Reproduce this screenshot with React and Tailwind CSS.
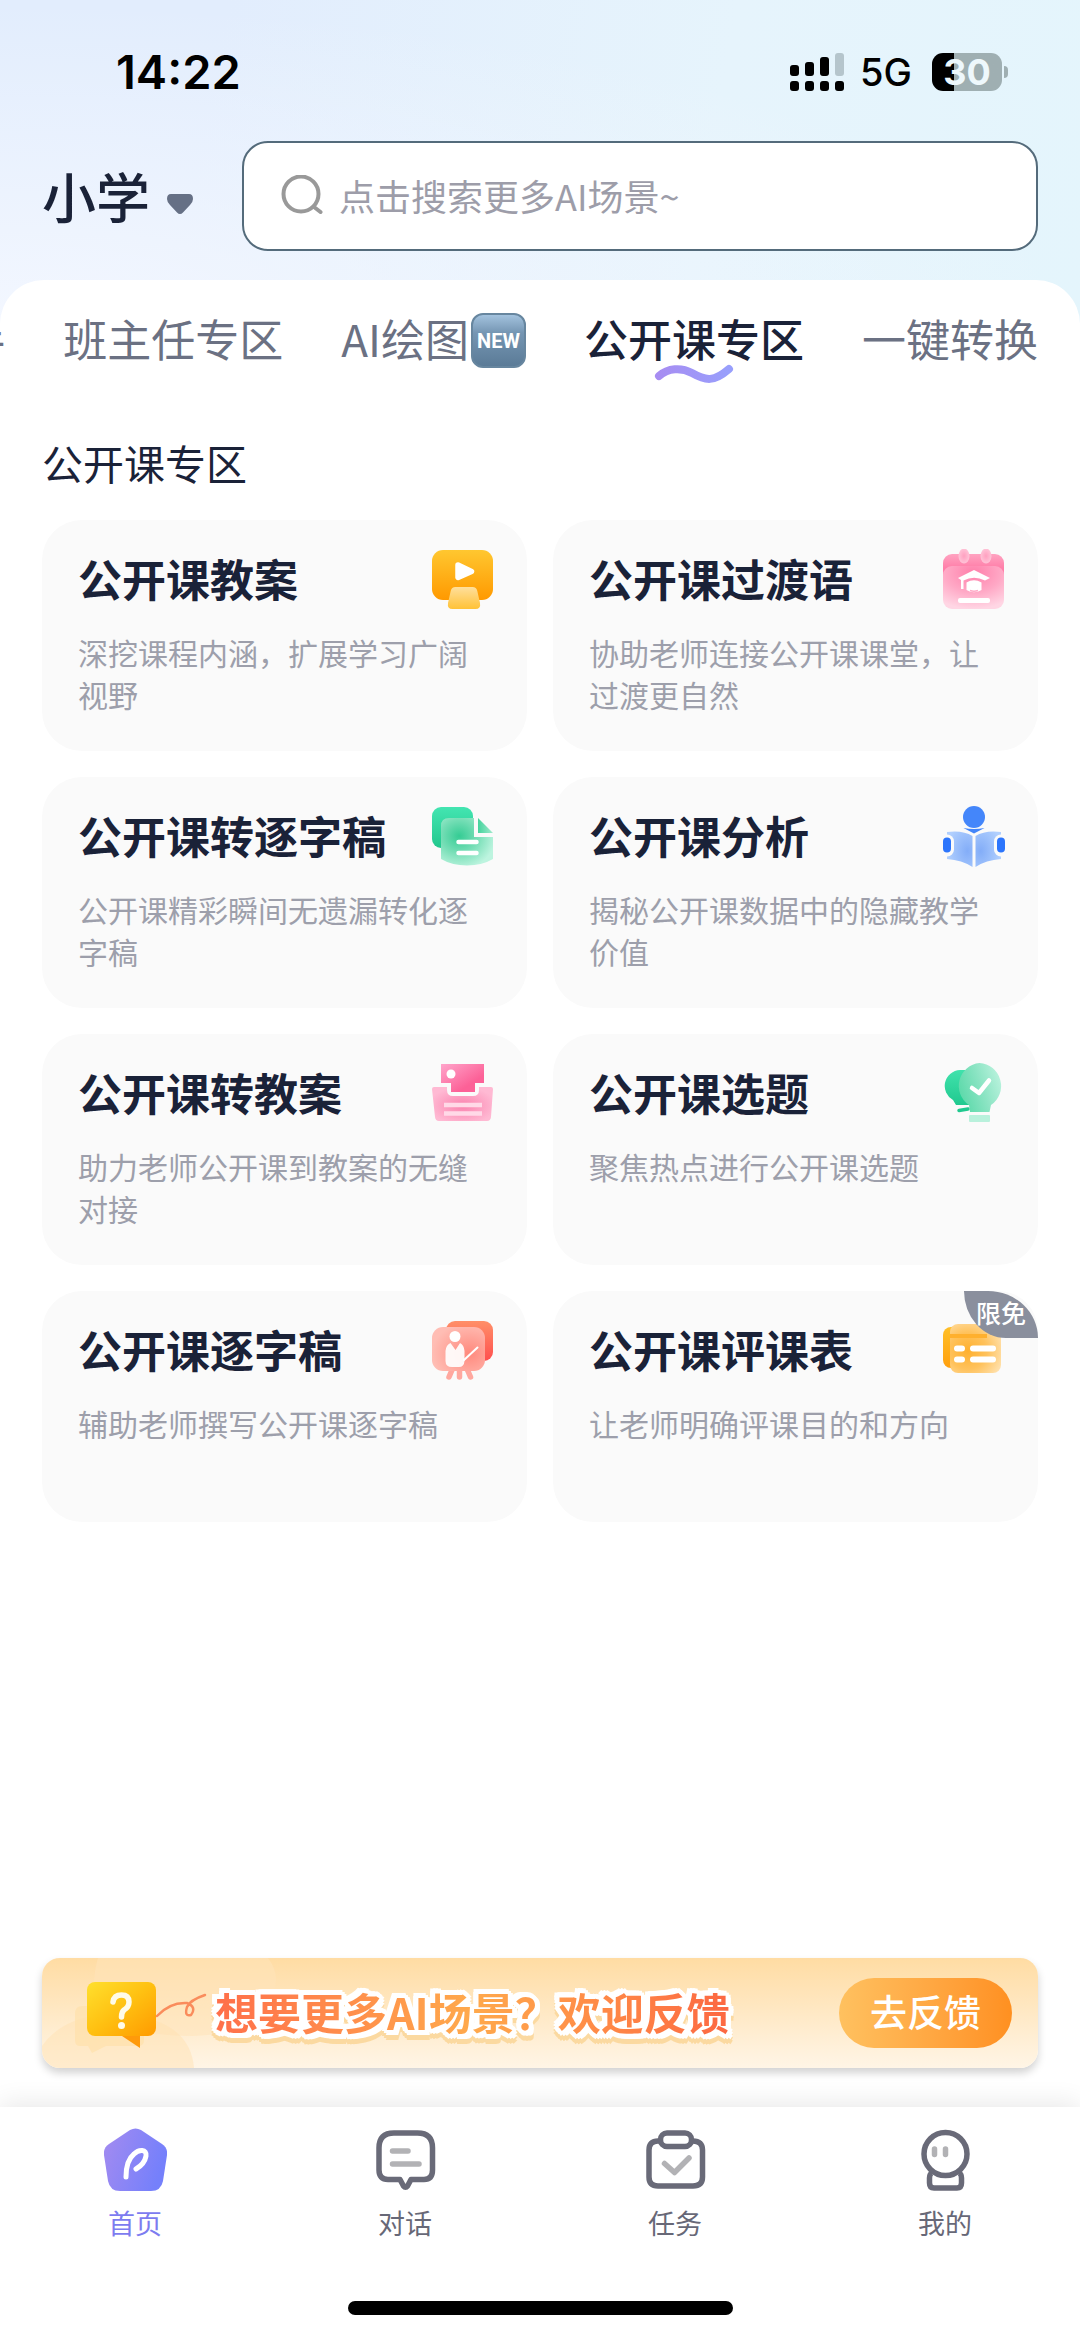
import React, { useState } from "react";
import clsx from "clsx";

/* ---------- card icons ---------- */

const LessonPlanIcon = () => (
  <>
    <defs>
      <linearGradient id="planBack" x1="0" y1="0" x2="0" y2="1">
        <stop offset="0" stopColor="#ffc730" />
        <stop offset="1" stopColor="#ff9900" />
      </linearGradient>
      <linearGradient id="planFront" x1="0" y1="0" x2="0" y2="1">
        <stop offset="0" stopColor="#ffdf9c" />
        <stop offset="1" stopColor="#ffc237" />
      </linearGradient>
    </defs>
    <rect x="0" y="1" width="61" height="50" rx="11" fill="url(#planBack)" />
    <path d="M26 16L39.500 22.500L26 28.500Z" fill="#fff" stroke="#fff" strokeWidth="5.500" strokeLinejoin="round" />
    <path d="M23.500 38H40.500Q44.500 38 45.300 42L48 54Q49 60 43.500 60H20.500Q15 60 16 54L18.700 42Q19.500 38 23.500 38Z" fill="url(#planFront)" />
  </>
);

const TransitionIcon = () => (
  <>
    <defs>
      <linearGradient id="calBack" x1="0" y1="0" x2="0" y2="1">
        <stop offset="0" stopColor="#ffa3c1" />
        <stop offset="0.350" stopColor="#ff7fa9" />
      </linearGradient>
      <radialGradient id="calFront" cx="0.500" cy="0.150" r="0.850">
        <stop offset="0" stopColor="#ff80ab" />
        <stop offset="0.550" stopColor="#ffa9c6" />
        <stop offset="1" stopColor="#ffd6e4" />
      </radialGradient>
      <radialGradient id="calRing">
        <stop offset="0" stopColor="#ffa0c0" />
        <stop offset="1" stopColor="#ffc3d7" />
      </radialGradient>
    </defs>
    <rect x="0" y="5" width="61" height="40" rx="9" fill="url(#calBack)" />
    <rect x="0" y="17" width="61" height="43" rx="9" fill="url(#calFront)" />
    <ellipse cx="21" cy="7" rx="5.500" ry="7.500" fill="url(#calRing)" />
    <ellipse cx="43" cy="7" rx="5.500" ry="7.500" fill="url(#calRing)" />
    <path d="M31 21L47 29L42 31.500Q31 26 20.500 31.500V40H18V31L15 29Z" fill="#fff" />
    <path d="M23.500 33.500Q31 29 38.500 33.500V41Q31 45.500 23.500 41Z" fill="#fff" />
    <path d="M27 41.500Q31 43 35 41.500" stroke="#ffa9c6" strokeWidth="1.500" fill="none" />
    <rect x="15" y="49" width="32" height="5" rx="2" fill="#fff" />
  </>
);

const TranscriptIcon = () => (
  <>
    <defs>
      <linearGradient id="docBack" x1="0" y1="0" x2="0" y2="1">
        <stop offset="0" stopColor="#43e5b1" />
        <stop offset="1" stopColor="#22c78d" />
      </linearGradient>
      <radialGradient id="docFront" cx="0.350" cy="0.380" r="0.700">
        <stop offset="0" stopColor="#35cc94" />
        <stop offset="0.500" stopColor="#76deb6" />
        <stop offset="1" stopColor="#bdf4df" />
      </radialGradient>
      <linearGradient id="docFold" x1="0" y1="0" x2="1" y2="0">
        <stop offset="0" stopColor="#45d39d" />
        <stop offset="1" stopColor="#a2ebce" />
      </linearGradient>
    </defs>
    <rect x="0" y="1" width="41" height="41" rx="9" fill="url(#docBack)" />
    <path d="M17 12H42V31H61V53Q50 59.500 35 59.500Q20 59.500 9 53V20Q9 12 17 12Z" fill="url(#docFront)" />
    <path d="M46 12L61 27H46Z" fill="url(#docFold)" />
    <path d="M26.500 36H44.500M26.500 47H44.500" stroke="#fff" strokeWidth="4.500" strokeLinecap="round" />
  </>
);

const AnalysisIcon = () => (
  <>
    <defs>
      <radialGradient id="pageLeft" cx="0.800" cy="0.550" r="0.800">
        <stop offset="0" stopColor="#83adf8" />
        <stop offset="1" stopColor="#b0cffe" />
      </radialGradient>
      <radialGradient id="pageRight" cx="0.200" cy="0.550" r="0.800">
        <stop offset="0" stopColor="#83adf8" />
        <stop offset="1" stopColor="#b0cffe" />
      </radialGradient>
    </defs>
    <circle cx="31" cy="11" r="11" fill="#4486fa" />
    <path d="M20.500 22Q31 24 41.500 22L31 27.500Z" fill="#4486fa" />
    <path d="M4 26Q20 24 29.500 30V61Q19 54 4 53Z" fill="url(#pageLeft)" />
    <path d="M58 26Q42 24 32.500 30V61Q43 54 58 53Z" fill="url(#pageRight)" />
    <rect x="-3" y="28.500" width="14" height="22" rx="7" fill="#fafafa" />
    <rect x="51" y="28.500" width="14" height="22" rx="7" fill="#fafafa" />
    <rect x="0" y="31.500" width="8" height="15" rx="4" fill="#2c75fc" />
    <rect x="54" y="31.500" width="8" height="15" rx="4" fill="#2c75fc" />
  </>
);

const ToPlanIcon = () => (
  <>
    <defs>
      <linearGradient id="sheet" x1="0" y1="0" x2="1" y2="1">
        <stop offset="0" stopColor="#ffa5cb" />
        <stop offset="0.700" stopColor="#fc6197" />
        <stop offset="1" stopColor="#fc6197" />
      </linearGradient>
      <radialGradient id="tray" cx="0.500" cy="0.550" r="0.550">
        <stop offset="0" stopColor="#fa82ae" />
        <stop offset="1" stopColor="#ffb9d3" />
      </radialGradient>
    </defs>
    <path d="M9 1H52V20H43V29H19V20H9Z" fill="url(#sheet)" />
    <circle cx="19" cy="11" r="4.500" fill="#fff" />
    <path d="M2 24H15V27Q15 33 21 33H41Q47 33 47 27V24H59Q61 24 61 26L59 54Q58.500 58 55 58H7Q3.500 58 3 54L0 26Q0 24 2 24Z" fill="url(#tray)" />
    <path d="M12 42H50M12 50.500H50" stroke="#ffd9e7" strokeWidth="4.500" />
  </>
);

const TopicIcon = () => (
  <>
    <defs>
      <linearGradient id="bulbBack" x1="0" y1="0" x2="0" y2="1">
        <stop offset="0" stopColor="#41e2ac" />
        <stop offset="1" stopColor="#20c98f" />
      </linearGradient>
      <linearGradient id="bulbFront" x1="0" y1="0.600" x2="1" y2="0.200">
        <stop offset="0" stopColor="#5cd9aa" />
        <stop offset="0.500" stopColor="#8be4c3" />
        <stop offset="1" stopColor="#bdf3df" />
      </linearGradient>
    </defs>
    <path d="M17 7A16 16 0 0 0 10 37L13 42H28V7Z" fill="url(#bulbBack)" />
    <path d="M16 47.500L25 46" stroke="#20c98f" strokeWidth="3.500" strokeLinecap="round" />
    <path d="M36.500 0A23 23 0 0 1 48 42L46.500 49H27L26 42A23 23 0 0 1 36.500 0Z" fill="url(#bulbFront)" />
    <rect x="26" y="52" width="21" height="7" rx="1" fill="#b9f1dc" />
    <path d="M29 25L36 30L46 17.500" stroke="#fff" strokeWidth="4.500" strokeLinecap="round" strokeLinejoin="round" fill="none" />
  </>
);

const ScriptIcon = () => (
  <>
    <defs>
      <linearGradient id="boardBack" x1="0" y1="0" x2="0" y2="1">
        <stop offset="0" stopColor="#ff8f68" />
        <stop offset="1" stopColor="#ff4f4f" />
      </linearGradient>
      <radialGradient id="boardFront" cx="0.700" cy="0.600" r="0.700">
        <stop offset="0" stopColor="#ff897d" />
        <stop offset="1" stopColor="#ffbdb4" />
      </radialGradient>
    </defs>
    <rect x="14" y="1" width="47" height="40" rx="9" fill="url(#boardBack)" />
    <path d="M20 50L17 57M27.500 50V57M35.500 50L38.500 57" stroke="#ffa89f" strokeWidth="5.500" strokeLinecap="round" />
    <rect x="0" y="7" width="53" height="44" rx="11" fill="url(#boardFront)" />
    <circle cx="23" cy="16.500" r="5.500" fill="#fff" />
    <path d="M18.500 23L23.500 30L28 23Q32 25 32.500 31V41Q32 47 27 47H20Q13.500 47 13.500 41V31Q14 25 18.500 23Z" fill="#fff" fillOpacity="0.920" />
    <path d="M32 40L45.500 27.500" stroke="#fff" strokeWidth="2" strokeLinecap="round" />
  </>
);

const ReviewTableIcon = () => (
  <>
    <defs>
      <linearGradient id="tableBack" x1="0" y1="0" x2="0" y2="1">
        <stop offset="0" stopColor="#ffbf27" />
        <stop offset="1" stopColor="#ff9f0d" />
      </linearGradient>
      <radialGradient id="tableFront" cx="0.350" cy="0.550" r="0.750">
        <stop offset="0" stopColor="#ffb02e" />
        <stop offset="0.500" stopColor="#ffc25c" />
        <stop offset="1" stopColor="#ffe3b3" />
      </radialGradient>
    </defs>
    <rect x="0" y="7" width="30" height="41" rx="8" fill="url(#tableBack)" />
    <rect x="7" y="4" width="51" height="49" rx="8" fill="url(#tableFront)" />
    <path d="M7 14H44V18H7Z" fill="#ffb02e" />
    <path d="M14 28.500H19M30 28.500H50M14 39.500H19M30 39.500H50" stroke="#fff" strokeWidth="6" strokeLinecap="round" />
  </>
);

const cards = [
  { title: "公开课教案", desc: "深挖课程内涵，扩展学习广阔视野", icon: LessonPlanIcon },
  { title: "公开课过渡语", desc: "协助老师连接公开课课堂，让过渡更自然", icon: TransitionIcon },
  { title: "公开课转逐字稿", desc: "公开课精彩瞬间无遗漏转化逐字稿", icon: TranscriptIcon },
  { title: "公开课分析", desc: "揭秘公开课数据中的隐藏教学价值", icon: AnalysisIcon },
  { title: "公开课转教案", desc: "助力老师公开课到教案的无缝对接", icon: ToPlanIcon },
  { title: "公开课选题", desc: "聚焦热点进行公开课选题", icon: TopicIcon },
  { title: "公开课逐字稿", desc: "辅助老师撰写公开课逐字稿", icon: ScriptIcon },
  { title: "公开课评课表", desc: "让老师明确评课目的和方向", icon: ReviewTableIcon, badge: "限免" },
];

const tabs = [
  { label: "小助手" },
  { label: "班主任专区" },
  { label: "AI绘图", isNew: true },
  { label: "公开课专区" },
  { label: "一键转换" },
];

/* ---------- bottom nav icons ---------- */

const HomeIcon = () => (
  <>
    <defs>
      <linearGradient id="home" x1="0" y1="0" x2="1" y2="0.300">
        <stop offset="0" stopColor="#a48bf0" />
        <stop offset="1" stopColor="#7580fb" />
      </linearGradient>
    </defs>
    <path d="M26 2Q31.500 -1 37 2L58 16Q64 20 63 27L59 53Q57 63 47 63H16Q6 63 4 53L0 27Q-1 20 5 16Z" fill="url(#home)" />
    <path d="M22 49C22 38 25 30 30 26C35 21 43 21 42 28C41 34 37 38 32 41" stroke="#fff" strokeWidth="5" strokeLinecap="round" strokeLinejoin="round" fill="none" />
  </>
);

const ChatIcon = () => (
  <>
    <path d="M20 5H43.500Q58.500 5 58.500 20V42Q58.500 51.500 50 51.500H37L33.500 58Q31.500 60.500 29.500 58L26 51.500H14Q5 51.500 5 42V20Q5 5 20 5Z" stroke="#696a78" strokeWidth="5.500" strokeLinejoin="round" fill="none" />
    <path d="M18.500 23H34M18.500 36H45" stroke="#b2b2b5" strokeWidth="5.500" strokeLinecap="round" />
  </>
);

const TaskIcon = () => (
  <>
    <path d="M16 13H14Q5 13 5 22V49Q5 58 14 58H49Q58.500 58 58.500 49V22Q58.500 13 49 13H47" stroke="#696a78" strokeWidth="5.500" fill="none" />
    <rect x="16.500" y="5" width="31" height="13.500" rx="6.500" stroke="#696a78" strokeWidth="5.500" fill="none" />
    <path d="M20.500 35.500L30.500 44.500L45 30" stroke="#b2b2b5" strokeWidth="5.500" strokeLinecap="round" strokeLinejoin="round" fill="none" />
  </>
);

const MeIcon = () => (
  <>
    <path d="M18 45Q15.500 46 15.500 50V55Q15.500 60 20 60H43Q47.500 60 47.500 55V50Q47.500 46 45 45" stroke="#696a78" strokeWidth="5.500" fill="none" />
    <circle cx="31.500" cy="26" r="21.500" stroke="#696a78" strokeWidth="5.500" fill="none" />
    <path d="M20.500 21V26.500M31.500 21V26.500" stroke="#b2b2b5" strokeWidth="5.500" strokeLinecap="round" />
  </>
);

const navItems = [
  { label: "首页", icon: HomeIcon },
  { label: "对话", icon: ChatIcon },
  { label: "任务", icon: TaskIcon },
  { label: "我的", icon: MeIcon },
];

const StatusBar = () => (
  <div className="flex items-center justify-between pt-[49px] pb-[46px] pl-[116px] pr-[72px] font-['Inter',sans-serif] text-black">
    <span className="text-[47px] leading-[46px] font-semibold">14:22</span>
    <div className="flex items-center">
      <svg viewBox="0 0 54 38" className="w-[54px] h-[38px]">
        <g fill="#000">
          <rect x="0" y="12" width="9" height="11" rx="3" />
          <rect x="15" y="9" width="9" height="14" rx="3" />
          <rect x="30" y="4" width="9" height="19" rx="3" />
          <rect x="0" y="28" width="9" height="10" rx="3" />
          <rect x="15" y="28" width="9" height="10" rx="3" />
          <rect x="30" y="28" width="9" height="10" rx="3" />
          <rect x="45" y="28" width="9" height="10" rx="3" />
        </g>
        <rect x="45" y="0" width="9" height="23" rx="3" fill="#b5c5cc" />
      </svg>
      <span className="ml-4 text-[38px] leading-[46px] font-medium">5G</span>
      <div className="ml-5 flex h-[38px] w-[70px] items-center justify-center rounded-[11px] bg-linear-to-r from-black from-31% to-[#9fafb2] to-31% text-[36px] font-bold text-[#eef8fc]">
        30
      </div>
      <span className="ml-[2px] h-3 w-1 rounded-r-full bg-[#9fafb2]" />
    </div>
  </div>
);

const SearchHeader = () => {
  const [grade, setGrade] = useState("小学");
  const [keyword, setKeyword] = useState("");

  return (
    <div className="flex items-center px-[42px] pb-[29px]">
      <label className="flex items-center gap-4">
        <select
          aria-label="学段"
          value={grade}
          onChange={(e) => setGrade(e.target.value)}
          className="w-[108px] appearance-none bg-transparent text-[54px] leading-[72px] font-medium text-[#1a2238] outline-none"
        >
          <option>小学</option>
          <option>初中</option>
          <option>高中</option>
        </select>
        <svg viewBox="0 0 28 22" className="pointer-events-none mt-4 h-[22px] w-[28px]">
          <path d="M5 1H23Q27 1 27 6Q27 9 24 12L17 19.500Q14 22.500 11 19.500L4 12Q1 9 1 6Q1 1 5 1Z" fill="#667085" />
        </svg>
      </label>

      <label className="ml-12 flex h-[110px] flex-1 items-center gap-4 rounded-[26px] border-2 border-[#546b7b] bg-white pl-[37px] pr-6">
        <svg viewBox="0 0 42 42" fill="none" className="h-[42px] w-[42px] shrink-0" stroke="#999" strokeWidth="4" strokeLinecap="round">
          <circle cx="20" cy="19" r="17.500" />
          <path d="M33 32L39.500 37" />
        </svg>
        <input
          type="text"
          aria-label="搜索"
          value={keyword}
          onChange={(e) => setKeyword(e.target.value)}
          placeholder="点击搜索更多AI场景~"
          className="min-w-0 flex-1 bg-transparent pb-[3px] text-[36px] text-[#1a2238] outline-none placeholder:text-[#9d9da9]"
        />
      </label>
    </div>
  );
};

const Tabs = ({ active, onChange }) => (
  <nav className="flex justify-end gap-[58px] overflow-hidden rounded-t-[44px] px-[42px] pt-[28px]">
    {tabs.map((tab) => (
      <button
        key={tab.label}
        type="button"
        onClick={() => onChange(tab.label)}
        className={clsx(
          "relative flex h-[78px] shrink-0 items-start text-[44px] leading-[60px] whitespace-nowrap",
          active === tab.label ? "font-medium text-[#1a2238]" : "text-[#6b7183]"
        )}
      >
        {tab.label}
        {tab.isNew && (
          <span className="mt-[5px] ml-[2px] flex h-[55px] w-[55px] items-center justify-center rounded-xl border-2 border-[#67869f] bg-linear-to-b from-[#a3c2de] via-[#7596b3] via-35% to-[#5b7b97] font-['Roboto',sans-serif] text-[20px] leading-none font-bold text-white">
            NEW
          </span>
        )}
        {active === tab.label && (
          <svg viewBox="0 0 80 22" className="absolute bottom-0 left-1/2 h-[22px] w-[80px] -translate-x-1/2" fill="none">
            <defs>
              <linearGradient id="wave" x1="0" y1="0" x2="1" y2="0">
                <stop offset="0" stopColor="#a78df2" />
                <stop offset="1" stopColor="#989ffc" />
              </linearGradient>
            </defs>
            <path d="M5 12C14 4 27 3 38 9C52 17 60 18 75 5" stroke="url(#wave)" strokeWidth="8" strokeLinecap="round" />
          </svg>
        )}
      </button>
    ))}
  </nav>
);

const SceneCard = ({ title, desc, icon: CardIcon, badge }) => (
  <button
    type="button"
    className="relative flex min-h-[231px] flex-col overflow-hidden rounded-[40px] bg-[#fafafa] pt-[29px] pb-[33px] pl-9 pr-[33px] text-left"
  >
    <span className="flex w-full items-start justify-between">
      <span className="text-[44px] leading-[58px] font-bold text-[#1a2238]">{title}</span>
      <svg viewBox="0 0 62 62" className="h-[62px] w-[62px] shrink-0" fill="none">
        <CardIcon />
      </svg>
    </span>
    <span className="mt-5 text-[30px] leading-[42px] text-[#9d9fab]">{desc}</span>
    {badge && (
      <span className="absolute top-0 right-0 flex h-[47px] w-[74px] items-center justify-center rounded-tr-[50px_47px] rounded-bl-[42px_47px] bg-[#8a8f9d] pb-1 text-[25px] leading-none font-medium text-white">
        {badge}
      </span>
    )}
  </button>
);

const FeedbackBanner = () => (
  <div className="relative mx-[42px] mt-auto mb-[39px] flex h-[110px] items-center overflow-hidden rounded-[18px] bg-linear-to-b from-[#ffdca3] to-[#fff5e6] pl-[44px] pr-[26px] shadow-[0_5px_8px_rgba(0,0,0,0.18)]">
    <svg viewBox="0 0 340 110" className="absolute top-0 left-0 h-[110px] w-[340px]" fill="none">
      <path d="M56 0H226Q234 10 234 22Q230 76 150 78Q60 78 52 30Q52 12 56 0Z" fill="#ffe4b9" fillOpacity="0.550" />
      <path d="M0 88Q22 56 76 56Q148 60 152 110H0Z" fill="#ffdfaf" fillOpacity="0.450" />
      <path d="M40 48H96Q102 48 102 56V82Q102 88 96 88H64L50 95L46 88H38Q33 88 33 82V56Q33 48 40 48Z" fill="#ffe0a6" fillOpacity="0.600" />
    </svg>
    <svg viewBox="0 0 122 72" className="relative h-[72px] w-[122px] shrink-0" fill="none">
      <defs>
        <linearGradient id="bubble" x1="0" y1="0" x2="1" y2="1">
          <stop offset="0" stopColor="#ffe02e" />
          <stop offset="0.500" stopColor="#ffc011" />
          <stop offset="1" stopColor="#ff9a00" />
        </linearGradient>
      </defs>
      <path d="M33 57L54 71V52Z" fill="#ff9a0a" />
      <rect x="1" y="5" width="69" height="54" rx="8" fill="url(#bubble)" />
      <path d="M27 25Q28 18 35.500 18Q43 18 43 25Q43 30 38 33Q35.500 35 35.500 40" stroke="#fffbe8" strokeWidth="5.500" strokeLinecap="round" />
      <circle cx="35.500" cy="48.500" r="3.500" fill="#fffbe8" />
      <path d="M71 39Q84 25 101 26Q111 30 105 38Q98 40 101 30Q104 23 119 18" stroke="#fa8c5c" strokeWidth="2.500" strokeLinecap="round" />
    </svg>
    <span className="relative mb-1 ml-[7px] bg-linear-to-r from-[#ff6f4a] via-[#ffa94c] to-[#fc6742] bg-clip-text text-[43px] leading-[60px] font-bold whitespace-nowrap text-transparent [filter:drop-shadow(3px_0_0_#fff)_drop-shadow(-3px_0_0_#fff)_drop-shadow(0_3px_0_#fff)_drop-shadow(0_-3px_0_#fff)_drop-shadow(2px_2px_0_#fff)_drop-shadow(-2px_-2px_0_#fff)_drop-shadow(0_5px_0_#fbd9a0)]">
      想要更多AI场景？欢迎反馈
    </span>
    <button
      type="button"
      className="relative ml-auto flex h-[70px] w-[173px] items-center justify-center rounded-full bg-linear-to-r from-[#ffc15f] to-[#ff9020] pb-1 text-[37px] leading-none font-medium text-white"
    >
      去反馈
    </button>
  </div>
);

const BottomNav = () => {
  const [current, setCurrent] = useState("首页");

  return (
    <footer className="relative bg-white pt-[21px] pb-[22px] shadow-[0_-4px_24px_rgba(0,0,0,0.09)]">
      <nav className="grid grid-cols-4">
        {navItems.map(({ label, icon: NavIcon }) => (
          <button key={label} type="button" onClick={() => setCurrent(label)} className="flex flex-col items-center">
            <svg viewBox="0 0 63 63" className="h-[63px] w-[63px]" fill="none">
              <NavIcon />
            </svg>
            <span
              className={clsx(
                "mt-[14px] text-[27px] leading-[36px]",
                current === label ? "text-[#7d7cf0]" : "text-[#676877]"
              )}
            >
              {label}
            </span>
          </button>
        ))}
      </nav>
      <div className="mx-auto mt-[60px] h-[14px] w-[385px] rounded-full bg-black" />
    </footer>
  );
};

const App = () => {
  const [activeTab, setActiveTab] = useState("公开课专区");

  return (
    <div className="flex min-h-screen flex-col bg-white font-['Noto_Sans_CJK_SC',sans-serif]">
      <header className="bg-[radial-gradient(ellipse_at_bottom_left,#f3f7ff,transparent_70%),linear-gradient(100deg,#e2edfd_20%,#e6f4fc_65%,#e4f5fc)] pb-11">
        <StatusBar />
        <SearchHeader />
      </header>

      <main className="-mt-11 flex flex-1 flex-col rounded-t-[44px] bg-white">
        <Tabs active={activeTab} onChange={setActiveTab} />

        <h2 className="mt-[46px] px-[42px] text-[41px] leading-[60px] text-[#1a2238]">{activeTab}</h2>
        <section className="mt-7 grid grid-cols-2 gap-[26px] px-[42px]">
          {cards.map((card) => (
            <SceneCard key={card.title} {...card} />
          ))}
        </section>

        <FeedbackBanner />
      </main>

      <BottomNav />
    </div>
  );
};

export default App;
